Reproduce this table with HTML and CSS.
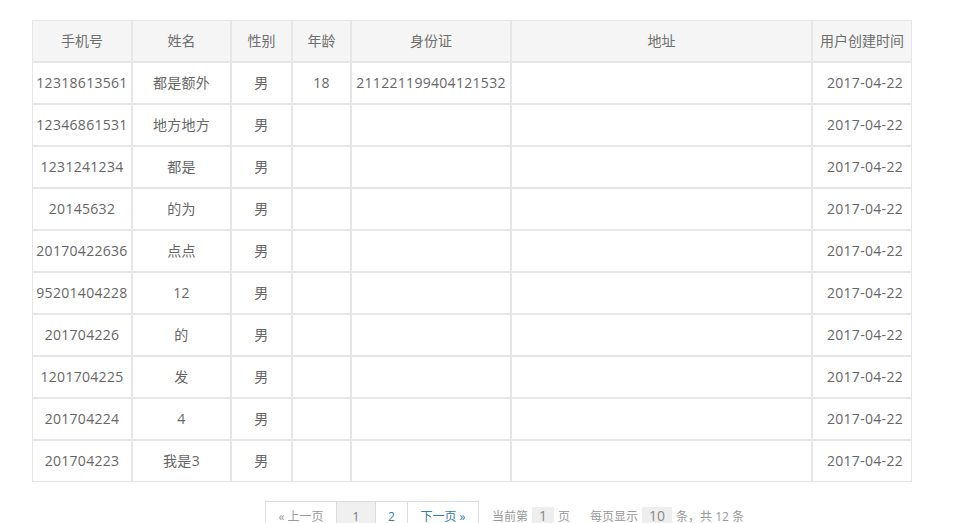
FILE: index.html
```html
<!DOCTYPE html>
<html lang="zh-CN">
<head>
<meta charset="utf-8">
<title>用户列表</title>
<link rel="stylesheet" href="styles.css">
</head>
<body>
<div class="page">
  <table class="grid">
    <colgroup>
      <col class="c-phone"><col class="c-name"><col class="c-sex"><col class="c-age"><col class="c-id"><col class="c-addr"><col class="c-date">
    </colgroup>
    <thead>
      <tr><th>手机号</th><th>姓名</th><th>性别</th><th>年龄</th><th>身份证</th><th>地址</th><th>用户创建时间</th></tr>
    </thead>
    <tbody>
      <tr><td>12318613561</td><td>都是额外</td><td>男</td><td>18</td><td>211221199404121532</td><td></td><td class="date">2017-04-22</td></tr>
      <tr><td>12346861531</td><td>地方地方</td><td>男</td><td></td><td></td><td></td><td class="date">2017-04-22</td></tr>
      <tr><td>1231241234</td><td>都是</td><td>男</td><td></td><td></td><td></td><td class="date">2017-04-22</td></tr>
      <tr><td>20145632</td><td>的为</td><td>男</td><td></td><td></td><td></td><td class="date">2017-04-22</td></tr>
      <tr><td>20170422636</td><td>点点</td><td>男</td><td></td><td></td><td></td><td class="date">2017-04-22</td></tr>
      <tr><td>95201404228</td><td>12</td><td>男</td><td></td><td></td><td></td><td class="date">2017-04-22</td></tr>
      <tr><td>201704226</td><td>的</td><td>男</td><td></td><td></td><td></td><td class="date">2017-04-22</td></tr>
      <tr><td>1201704225</td><td>发</td><td>男</td><td></td><td></td><td></td><td class="date">2017-04-22</td></tr>
      <tr><td>201704224</td><td>4</td><td>男</td><td></td><td></td><td></td><td class="date">2017-04-22</td></tr>
      <tr><td>201704223</td><td>我是3</td><td>男</td><td></td><td></td><td></td><td class="date">2017-04-22</td></tr>
    </tbody>
  </table>
  <div class="pager-row">
    <ul class="pager">
      <li class="prev disabled">« 上一页</li>
      <li class="num active">1</li>
      <li class="num">2</li>
      <li class="next">下一页 »</li>
    </ul>
    <div class="info">
      <span>当前第</span><span class="box">1</span><span>页</span>
      <span class="sp">每页显示</span><span class="box">10</span><span>条，共 12 条</span>
    </div>
  </div>
</div>
</body>
</html>
```

FILE: styles.css
```css
html, body {
  margin: 0;
  padding: 0;
  background: #fff;
}
body {
  font-family: "Open Sans", "Noto Sans CJK SC", sans-serif;
  color: #666;
}
.page {
  padding: 20px 0 0 32px;
}
.grid {
  border-collapse: separate;
  border-spacing: 0;
  width: 880px;
  table-layout: fixed;
  font-size: 14px;
  letter-spacing: 0.3px;
}
.c-phone { width: 100px; }
.c-name { width: 99px; }
.c-sex { width: 61px; }
.c-age { width: 59px; }
.c-id { width: 160px; }
.c-addr { width: 301px; }
.c-date { width: 100px; }
.grid th, .grid td {
  border: 1px solid #e6e6e6;
  padding: 0 1px;
  text-align: center;
  font-weight: normal;
  white-space: nowrap;
  box-sizing: border-box;
  height: 42px;
  line-height: 20px;
  color: #666;
}
.grid th {
  background: #f5f5f5;
  letter-spacing: 0;
  color: #6e6e6e;
}
.grid td.date {
  text-align: right;
  padding-right: 8px;
}
.pager-row {
  display: flex;
  align-items: center;
  margin-top: 19px;
  margin-left: 233px;
  font-size: 12px;
}
.pager {
  display: flex;
  list-style: none;
  margin: 0;
  padding: 0;
}
.pager li {
  border: 1px solid #ddd;
  margin-left: -1px;
  height: 30px;
  line-height: 30px;
  box-sizing: border-box;
  text-align: center;
  color: #337ab7;
  background: #fff;
}
.pager li:first-child { margin-left: 0; }
.pager .prev { width: 72px; color: #999; }
.pager .num { width: 40px; }
.pager .num.active { background: #f0f0f0; color: #777; }
.pager .num + .num { width: 33px; }
.pager .next { width: 72px; }
.info {
  display: flex;
  align-items: center;
  color: #999;
  margin-left: 13px;
  height: 30px;
}
.info .box {
  background: #eee;
  color: #888;
  font-size: 14px;
  padding: 0 7px;
  margin: 0 4px;
  line-height: 18px;
}
.info .sp { margin-left: 20px; }
```
